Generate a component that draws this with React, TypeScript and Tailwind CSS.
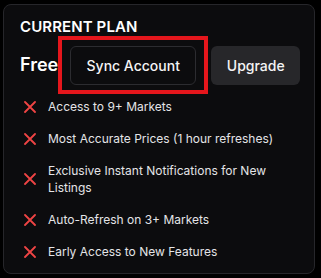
import React from "react";

const FEATURES = [
  "Access to 9+ Markets",
  "Most Accurate Prices (1 hour refreshes)",
  "Exclusive Instant Notifications for New Listings",
  "Auto-Refresh on 3+ Markets",
  "Early Access to New Features",
];

const Cross: React.FC = () => (
  <svg width="12" height="12" viewBox="0 0 12 12" className="shrink-0" fill="none">
    <path d="M1 1L11 11M11 1L1 11" stroke="#ef4444" strokeWidth="1.8" strokeLinecap="round" />
  </svg>
);

const App: React.FC = () => {
  return (
    <div
      className="w-[321px] h-[278px] bg-black pt-[4px] pl-[3px]"
      style={{ fontFamily: "Inter, 'Liberation Sans', sans-serif" }}
    >
      <div className="w-[312px] h-[270px] rounded-lg border border-[#26262a] bg-[#0c0c0e] pt-[12px] pl-[16px] pr-[12px]">
        {/* Header */}
        <h3 className="text-white font-semibold text-[15px] leading-[19px] tracking-[0.1px]">
          CURRENT PLAN
        </h3>

        {/* Plan row */}
        <div className="flex items-center">
          <span className="text-white font-semibold text-[18px] leading-[24px]">Free</span>
          <div className="border-4 border-[#e5161c] pt-[6px] pb-[5px] px-[8px]">
            <button className="h-[39px] w-[126px] rounded-md border border-[#2c2c30] bg-[#0c0c0e] text-[#f4f4f5] font-medium text-[14px]">
              Sync Account
            </button>
          </div>
          <button className="ml-[3px] h-[39px] w-[89px] rounded-md bg-[#27272a] text-[#f4f4f5] font-medium text-[14px]">
            Upgrade
          </button>
        </div>

        {/* Features */}
        <ul className="mt-[4px] flex flex-col gap-[15px] pl-[4px]">
          {FEATURES.map((f) => (
            <li key={f} className="flex items-center gap-[12px]">
              <Cross />
              <span className="text-[#e4e4e7] text-[12px] leading-[17px] max-w-[235px]">{f}</span>
            </li>
          ))}
        </ul>
      </div>
    </div>
  );
};

export default App;
